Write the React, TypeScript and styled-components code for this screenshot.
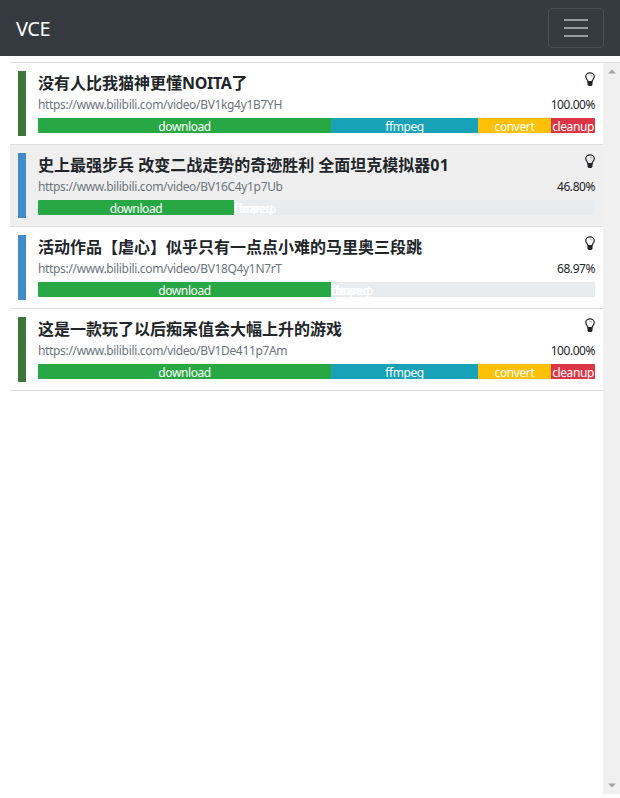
import React from "react";
import styled, { createGlobalStyle } from "styled-components";

const GlobalStyle = createGlobalStyle`
  *, *::before, *::after { box-sizing: border-box; }
  body {
    margin: 0;
    background: #fff;
    color: #212529;
    font-family: "Noto Sans", "Noto Sans CJK SC", sans-serif;
    overflow: hidden;
  }
`;

const Page = styled.div`
  display: flex;
  flex-direction: column;
  height: 798px;
  width: 620px;
`;

const Navbar = styled.header`
  display: flex;
  align-items: center;
  justify-content: space-between;
  height: 56px;
  padding: 0 16px;
  background: #343a40;
`;

const Brand = styled.span`
  color: #fff;
  font-size: 20px;
  line-height: 30px;
  letter-spacing: -0.45px;
  padding-top: 2px;
`;

const Toggler = styled.button`
  display: flex;
  align-items: center;
  justify-content: center;
  width: 56px;
  height: 40px;
  padding: 0;
  background: transparent;
  border: 1px solid #484e53;
  border-radius: 4px;
`;

const ListFrame = styled.main`
  display: flex;
  height: 732px;
  margin: 6px 0 0 10px;
  border-top: 1px solid #dfdfdf;
`;

const List = styled.ul`
  flex: 1;
  min-width: 0;
  margin: 0;
  padding: 0;
  list-style: none;
`;

const Row = styled.li<{ $active?: boolean }>`
  display: flex;
  gap: 12px;
  height: 82px;
  padding: 8px;
  border-bottom: 1px solid #dfdfdf;
  background: ${(p) => (p.$active ? "#efefef" : "#fff")};
`;

const Status = styled.div<{ $done: boolean }>`
  width: 8px;
  height: 65px;
  background: ${(p) => (p.$done ? "#3c763d" : "#428bca")};
`;

const Body = styled.div`
  flex: 1;
  min-width: 0;
`;

const Line = styled.div<{ $height: number }>`
  display: flex;
  justify-content: space-between;
  height: ${(p) => p.$height}px;
`;

const Title = styled.span`
  font-size: 16px;
  font-weight: 700;
  line-height: 24px;
  white-space: nowrap;
`;

const Latin = styled.span<{ $spacing: number }>`
  letter-spacing: ${(p) => p.$spacing}px;
`;

const Url = styled.span`
  color: #6c757d;
  font-size: 12px;
  line-height: 20px;
  letter-spacing: -0.34px;
`;

const Percent = styled.span`
  font-size: 12px;
  line-height: 20px;
  letter-spacing: -0.45px;
`;

const Progress = styled.div`
  display: flex;
  height: 15px;
  margin-top: 3px;
  overflow: hidden;
  border-radius: 1px;
  background: #e9ecef;
`;

const Segment = styled.div<{ $color: string }>`
  flex: none;
  display: flex;
  flex-direction: column;
  justify-content: center;
  height: 15px;
  background: ${(p) => p.$color};
  color: #fff;
  font-size: 12px;
  line-height: 18px;
  letter-spacing: -0.4px;
  text-align: center;
  white-space: nowrap;
`;

const SegmentLabel = styled.span`
  padding-top: 2px;
`;

const Scrollbar = styled.div`
  display: flex;
  flex-direction: column;
  justify-content: space-between;
  align-items: center;
  width: 17px;
  padding: 6px 0;
  background: #f0f0f0;
`;

const BulbSvg = styled.svg`
  flex: none;
  margin-top: 1px;
`;

const MenuIcon = () => (
  <svg width="30" height="30" viewBox="0 0 30 30" stroke="#999c9f" strokeWidth="2" strokeLinecap="butt">
    <path d="M3 7h24M3 15h24M3 23h24" />
  </svg>
);

const Bulb = () => (
  <BulbSvg width="10" height="15" viewBox="0 0 10 15">
    <path
      d="M3 9.8C3 7.6.7 6.9.7 4.6.7 2.3 2.6.9 5 .9s4.3 1.4 4.3 3.7c0 2.3-2.3 3-2.3 5.2z"
      fill="none"
      stroke="#24282c"
      strokeWidth="1.2"
    />
    <path d="M4.6 3.2c1.1 0 2 .3 2.2 1.2" fill="none" stroke="#777" strokeWidth=".8" />
    <path d="M2.5 9h5v3.4l-1 1.6h-3l-1-1.6z" fill="#212529" />
  </BulbSvg>
);

const Arrow = ({ down = false }: { down?: boolean }) => (
  <svg width="8" height="5" viewBox="0 0 8 5" fill="#a3a3a3">
    <path d={down ? "M0 .5h8L4 4.5z" : "M0 4.5h8L4 .5z"} />
  </svg>
);

const COLORS = ["#28a745", "#17a2b8", "#ffc107", "#dc3545"];
const STAGES = ["download", "ffmpeg", "convert", "cleanup"];
const COMPLETE = [293.2, 146.6, 73.3, 43.9];

interface Task {
  title: React.ReactNode;
  url: string;
  percent: string;
  widths: number[];
  done: boolean;
  active?: boolean;
}

const tasks: Task[] = [
  {
    title: <>没有人比我猫神更懂<Latin $spacing={-0.3}>NOITA</Latin>了</>,
    url: "https://www.bilibili.com/video/BV1kg4y1B7YH",
    percent: "100.00%",
    widths: COMPLETE,
    done: true,
  },
  {
    title: <>史上最强步兵 改变二战走势的奇迹胜利 全面坦克模拟器<Latin $spacing={0.2}>01</Latin></>,
    url: "https://www.bilibili.com/video/BV16C4y1p7Ub",
    percent: "46.80%",
    widths: [196, 0, 0, 0],
    done: false,
    active: true,
  },
  {
    title: "活动作品【虐心】似乎只有一点点小难的马里奥三段跳",
    url: "https://www.bilibili.com/video/BV18Q4y1N7rT",
    percent: "68.97%",
    widths: [293, 0, 0, 0],
    done: false,
  },
  {
    title: "这是一款玩了以后痴呆值会大幅上升的游戏",
    url: "https://www.bilibili.com/video/BV1De411p7Am",
    percent: "100.00%",
    widths: COMPLETE,
    done: true,
  },
];

const TaskRow = ({ task }: { task: Task }) => (
  <Row $active={task.active}>
    <Status $done={task.done} />
    <Body>
      <Line $height={24}>
        <Title>{task.title}</Title>
        <Bulb />
      </Line>
      <Line $height={20}>
        <Url>{task.url}</Url>
        <Percent>{task.percent}</Percent>
      </Line>
      <Progress>
        {STAGES.map((stage, i) => (
          <Segment key={stage} $color={COLORS[i]} style={{ width: task.widths[i] }}>
            <SegmentLabel>{stage}</SegmentLabel>
          </Segment>
        ))}
      </Progress>
    </Body>
  </Row>
);

export default function App() {
  return (
    <>
      <GlobalStyle />
      <Page>
        <Navbar>
          <Brand>VCE</Brand>
          <Toggler aria-label="Toggle navigation">
            <MenuIcon />
          </Toggler>
        </Navbar>
        <ListFrame>
          <List>
            {tasks.map((task) => (
              <TaskRow key={task.url} task={task} />
            ))}
          </List>
          <Scrollbar>
            <Arrow />
            <Arrow down />
          </Scrollbar>
        </ListFrame>
      </Page>
    </>
  );
}
